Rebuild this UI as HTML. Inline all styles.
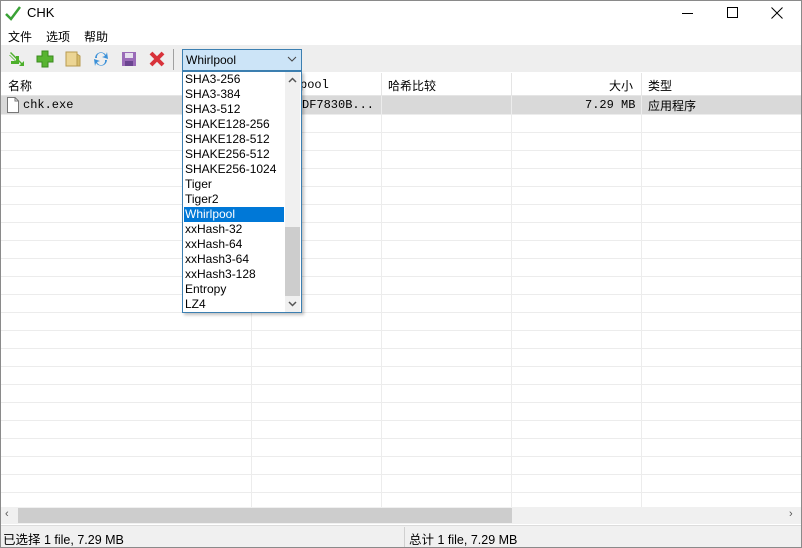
<!DOCTYPE html>
<html><head><meta charset="utf-8"><style>
*{margin:0;padding:0;box-sizing:border-box}
body{width:802px;height:548px;overflow:hidden;background:#fff;font-family:"Liberation Sans","Noto Sans CJK SC",sans-serif;font-size:12px;color:#000;position:relative}
.a{position:absolute}
.win{left:0;top:0;width:802px;height:548px;border:1px solid #8a8a8a}
.mono{font-family:"Liberation Mono","Noto Sans CJK SC",monospace;font-size:12px}
.vl{position:absolute;top:96px;height:411px;width:1px;background:#ececec}
.hl{position:absolute;left:1px;width:800px;height:1px;background:#ececec}
.item{position:absolute;left:2px;height:15px;line-height:15px;font-size:12px}
</style></head><body>
<div class="a win"></div>
<svg class="a" style="left:5px;top:5px" width="16" height="16" viewBox="0 0 16 16"><path d="M1 9 L6 14 L15 2" stroke="#3aa236" stroke-width="2.5" fill="none"/></svg>
<div class="a" style="left:27px;top:5px;font-size:13px">CHK</div>
<div class="a" style="left:682px;top:13px;width:11px;height:1px;background:#000"></div>
<div class="a" style="left:727px;top:7px;width:11px;height:11px;border:1px solid #000"></div>
<svg class="a" style="left:771px;top:7px" width="12" height="12"><path d="M0.5 0.5L11.5 11.5M11.5 0.5L0.5 11.5" stroke="#000" stroke-width="1"/></svg>
<div class="a" style="left:8px;top:28px;font-size:12px">文件</div>
<div class="a" style="left:46px;top:28px;font-size:12px">选项</div>
<div class="a" style="left:84px;top:28px;font-size:12px">帮助</div>
<div class="a" style="left:1px;top:45px;width:800px;height:27px;background:#eeeeee"></div>
<svg class="a" style="left:8px;top:50px" width="18" height="18"><path d="M2 5 L8 11 L8 6 L11 6 L11 14 L3 14 L3 11 L7 11 L1 5 Z M3 2 L14 13 L16 11 L16 16 L11 16 L13 14 L2 3Z" fill="#4caf2a"/></svg>
<svg class="a" style="left:36px;top:50px" width="18" height="18"><path d="M6 1h6v5h5v6h-5v5h-6v-5h-5v-6h5z" fill="#58b431" stroke="#3a8a1e"/></svg>
<svg class="a" style="left:64px;top:50px" width="18" height="18"><rect x="2" y="2" width="11" height="14" fill="#ecd594" stroke="#b89a50"/><path d="M13 4 L16 6 L16 16 L13 16Z" fill="#d8bd6c" stroke="#b89a50"/></svg>
<svg class="a" style="left:92px;top:50px" width="18" height="18"><path d="M3 8 A6 6 0 0 1 14 5 L15 2 L16 9 L10 7 L13 6 A4 4 0 0 0 5 8Z M15 10 A6 6 0 0 1 4 13 L3 16 L2 9 L8 11 L5 12 A4 4 0 0 0 13 10Z" fill="#3a90d8"/></svg>
<svg class="a" style="left:120px;top:50px" width="18" height="18"><rect x="2" y="2" width="14" height="14" fill="#9a6bb8"/><rect x="5" y="3" width="8" height="5" fill="#e6e0ee"/><rect x="5" y="11" width="8" height="5" fill="#6b4590"/></svg>
<svg class="a" style="left:148px;top:50px" width="18" height="18"><path d="M3 3L15 15M15 3L3 15" stroke="#d8323a" stroke-width="4"/></svg>
<div class="a" style="left:173px;top:49px;width:1px;height:21px;background:#a0a0a0"></div>
<div class="a" style="left:182px;top:49px;width:120px;height:22px;background:#cce4f7;border:1px solid #3c7fb1"></div>
<div class="a" style="left:186px;top:53px;font-size:12px">Whirlpool</div>
<svg class="a" style="left:287px;top:56px" width="10" height="7"><path d="M1 1L5 5L9 1" stroke="#444" fill="none"/></svg>
<div class="a" style="left:1px;top:73px;width:800px;height:23px;background:#fff;border-bottom:1px solid #e5e5e5"></div>
<div class="a" style="left:8px;top:77px">名称</div>
<div class="a mono" style="left:300px;top:78px">pool</div>
<div class="a" style="left:388px;top:77px">哈希比较</div>
<div class="a" style="left:609px;top:77px">大小</div>
<div class="a" style="left:648px;top:77px">类型</div>
<div class="a" style="left:251px;top:73px;width:1px;height:23px;background:#e5e5e5"></div>
<div class="a" style="left:381px;top:73px;width:1px;height:23px;background:#e5e5e5"></div>
<div class="a" style="left:511px;top:73px;width:1px;height:23px;background:#e5e5e5"></div>
<div class="a" style="left:641px;top:73px;width:1px;height:23px;background:#e5e5e5"></div>
<div class="a" style="left:1px;top:96px;width:800px;height:18px;background:#d9d9d9"></div>
<svg class="a" style="left:6px;top:97px" width="14" height="16"><path d="M1.5 0.5H9L12.5 4V15.5H1.5Z" fill="#fff" stroke="#777"/><path d="M9 0.5V4H12.5" fill="none" stroke="#777"/></svg>
<div class="a mono" style="left:23px;top:98px">chk.exe</div>
<div class="a mono" style="left:302px;top:98px">DF7830B...</div>
<div class="a mono" style="left:585px;top:98px">7.29 MB</div>
<div class="a" style="left:648px;top:97px">应用程序</div>
<div class="vl" style="left:251px"></div><div class="vl" style="left:381px"></div><div class="vl" style="left:511px"></div><div class="vl" style="left:641px"></div>
<div class="hl" style="top:114px"></div><div class="hl" style="top:132px"></div><div class="hl" style="top:150px"></div><div class="hl" style="top:168px"></div><div class="hl" style="top:186px"></div><div class="hl" style="top:204px"></div><div class="hl" style="top:222px"></div><div class="hl" style="top:240px"></div><div class="hl" style="top:258px"></div><div class="hl" style="top:276px"></div><div class="hl" style="top:294px"></div><div class="hl" style="top:312px"></div><div class="hl" style="top:330px"></div><div class="hl" style="top:348px"></div><div class="hl" style="top:366px"></div><div class="hl" style="top:384px"></div><div class="hl" style="top:402px"></div><div class="hl" style="top:420px"></div><div class="hl" style="top:438px"></div><div class="hl" style="top:456px"></div><div class="hl" style="top:474px"></div><div class="hl" style="top:492px"></div>
<div class="a" style="left:1px;top:507px;width:800px;height:17px;background:#f0f0f0"></div>
<div class="a" style="left:18px;top:508px;width:494px;height:15px;background:#cdcdcd"></div>
<div class="a" style="left:5px;top:508px;font-size:11px;color:#555">‹</div>
<div class="a" style="left:789px;top:508px;font-size:11px;color:#555">›</div>
<div class="a" style="left:1px;top:525px;width:800px;height:22px;background:#f0f0f0;border-top:1px solid #dcdcdc"></div>
<div class="a" style="left:404px;top:527px;width:1px;height:20px;background:#d0d0d0"></div>
<div class="a" style="left:3px;top:529px;font-size:12.5px">已选择 1 file, 7.29 MB</div>
<div class="a" style="left:409px;top:529px;font-size:12.5px">总计 1 file, 7.29 MB</div>
<div class="a" style="left:182px;top:71px;width:120px;height:242px;background:#fff;border:1px solid #3c7fb1;box-shadow:2px 2px 3px rgba(0,0,0,0.25)">
<div class="a" style="left:102px;top:0;width:15px;height:240px;background:#f0f0f0"></div>
<div class="a" style="left:102px;top:155px;width:15px;height:69px;background:#cdcdcd"></div>
<svg class="a" style="left:105px;top:5px" width="9" height="6"><path d="M1 5L4.5 1.5L8 5" stroke="#555" stroke-width="1.5" fill="none"/></svg>
<svg class="a" style="left:105px;top:229px" width="9" height="6"><path d="M1 1L4.5 4.5L8 1" stroke="#555" stroke-width="1.5" fill="none"/></svg>
<div class="a" style="left:1px;top:135px;width:100px;height:15px;background:#0078d7"></div>
<div class="item" style="top:0">SHA3-256</div>
<div class="item" style="top:15px">SHA3-384</div>
<div class="item" style="top:30px">SHA3-512</div>
<div class="item" style="top:45px">SHAKE128-256</div>
<div class="item" style="top:60px">SHAKE128-512</div>
<div class="item" style="top:75px">SHAKE256-512</div>
<div class="item" style="top:90px">SHAKE256-1024</div>
<div class="item" style="top:105px">Tiger</div>
<div class="item" style="top:120px">Tiger2</div>
<div class="item" style="top:135px;color:#fff">Whirlpool</div>
<div class="item" style="top:150px">xxHash-32</div>
<div class="item" style="top:165px">xxHash-64</div>
<div class="item" style="top:180px">xxHash3-64</div>
<div class="item" style="top:195px">xxHash3-128</div>
<div class="item" style="top:210px">Entropy</div>
<div class="item" style="top:225px">LZ4</div>
</div>
</body></html>
